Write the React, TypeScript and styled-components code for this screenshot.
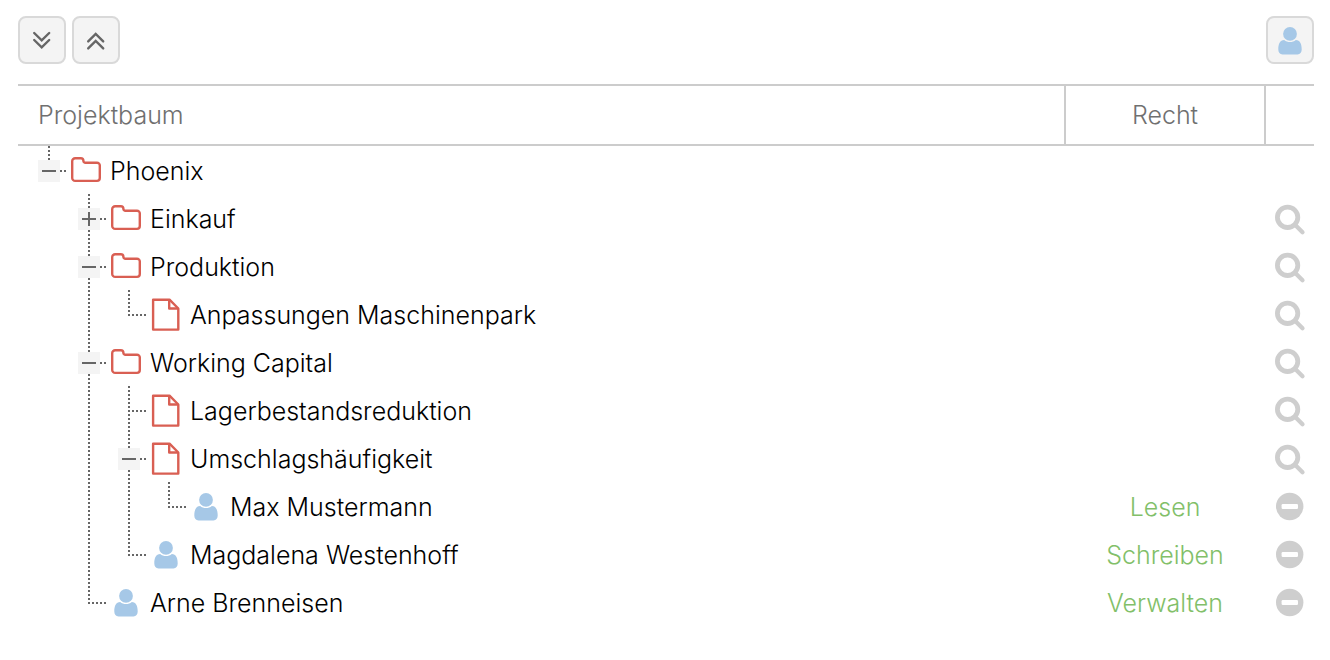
import React from "react";
import styled, { createGlobalStyle, css } from "styled-components";

const GlobalStyle = createGlobalStyle`
  *, *::before, *::after { box-sizing: border-box; }
  body {
    margin: 0;
    background: #fff;
    color: #000;
    font-family: Inter, "Liberation Sans", sans-serif;
    font-size: 25px;
    font-weight: 300;
    line-height: 32px;
  }
`;

const Page = styled.main`
  padding: 16px 16px 34px 18px;
`;

const Toolbar = styled.div`
  display: flex;
  gap: 6px;
  margin-bottom: 20px;
`;

const ToolButton = styled.button<{ $end?: boolean }>`
  display: flex;
  align-items: center;
  justify-content: center;
  width: 48px;
  height: 48px;
  padding: 0;
  border: 2px solid #d9d9d9;
  border-radius: 8px;
  background: #f4f4f4;
  color: #666;
  cursor: pointer;
  margin-left: ${(p) => (p.$end ? "auto" : "0")};
`;

const Table = styled.table`
  width: 100%;
  table-layout: fixed;
  border-collapse: separate;
  border-spacing: 0;
`;

const RightCol = styled.col`
  width: 200px;
`;

const ActionCol = styled.col`
  width: 50px;
`;

const HeadCell = styled.th<{ $center?: boolean }>`
  height: 62px;
  padding: 0 0 0 ${(p) => (p.$center ? "0" : "20px")};
  border-top: 2px solid #ccc;
  border-bottom: 2px solid #ccc;
  color: #707070;
  font-weight: 300;
  text-align: ${(p) => (p.$center ? "center" : "left")};

  & + & {
    border-left: 2px solid #ccc;
  }
`;

const Cell = styled.td`
  height: 48px;
  padding: 0;
`;

const NameCell = styled(Cell)`
  padding-left: 20px;
`;

const RightCell = styled(Cell)`
  padding: 2px 0 0 2px;
  color: #82bf69;
  text-align: center;
`;

const ActionCell = styled(Cell)`
  padding-left: 2px;
`;

const Node = styled.div`
  display: flex;
  align-items: center;
  height: 48px;
`;

type Line = "none" | "full" | "half";

const dotsDown = "repeating-linear-gradient(to bottom, #666 0 2px, transparent 2px 4px)";
const dotsAcross = "repeating-linear-gradient(to right, #666 0 2px, transparent 2px 4px)";

const Guide = styled.span<{ $line: Line }>`
  flex: none;
  width: 40px;
  height: 48px;
  ${(p) =>
    p.$line !== "none" &&
    css`
      background: ${dotsDown} 10px 0 / 2px 100% no-repeat;
    `}
`;

const Branch = styled.span<{ $line: Line }>`
  display: flex;
  flex: none;
  align-items: center;
  width: 32px;
  height: 48px;
  padding-top: 2px;
  background:
    ${dotsDown} 10px 0 / 2px ${(p) => (p.$line === "full" ? "48px" : "26px")} no-repeat,
    ${dotsAcross} 10px 24px / 18px 2px no-repeat;
`;

const Toggle = styled.button`
  display: flex;
  width: 22px;
  height: 22px;
  padding: 0;
  border: 0;
  background: #f4f4f4;
  cursor: pointer;
`;

const Label = styled.span`
  padding: 2px 0 0 8px;
  white-space: nowrap;
`;

const IconButton = styled.button`
  display: flex;
  align-items: center;
  justify-content: center;
  width: 48px;
  height: 48px;
  padding: 0;
  border: 0;
  background: none;
  cursor: pointer;
`;

const Glyph = styled.svg`
  display: block;
  flex: none;
`;

const ChevronsIcon = ({ up }: { up?: boolean }) => (
  <Glyph width="24" height="24" viewBox="0 0 24 24" fill="none" stroke="#666" strokeWidth="2.4" strokeLinecap="round" strokeLinejoin="miter">
    {up ? (
      <path d="M4.200 13.400 11.700 6l7.500 7.400M4.200 20.400 11.700 13l7.500 7.400" />
    ) : (
      <path d="M4.200 5 11.700 12.400 19.200 5M4.200 12 11.700 19.400 19.200 12" />
    )}
  </Glyph>
);

const PersonIcon = () => (
  <Glyph width="32" height="36" viewBox="0 0 32 36" fill="#a6c8e7">
    <circle cx="16" cy="11.9" r="6.9" />
    <path d="M10.2 17.9C6 18 4.3 21.8 4.3 27.6c0 3 1.6 4.8 4.2 4.8h15c2.6 0 4.2-1.8 4.2-4.8 0-5.8-1.7-9.6-5.9-9.7-1.6 1.3-3.6 2.1-5.8 2.1s-4.2-.8-5.8-2.1z" />
  </Glyph>
);

const FolderIcon = () => (
  <Glyph width="32" height="36" viewBox="0 0 32 36" fill="none" stroke="#d95f53" strokeWidth="2.4" strokeLinejoin="round">
    <path d="M2.2 9.200a3 3 0 0 1 3-3h5.600a2.600 2.600 0 0 1 2.600 2.600v.3a1.600 1.600 0 0 0 1.600 1.600h12a2.800 2.800 0 0 1 2.800 2.800v12.600a2.800 2.800 0 0 1-2.800 2.800H5.200a3 3 0 0 1-3-3z" />
  </Glyph>
);

const FileIcon = () => (
  <Glyph width="32" height="36" viewBox="0 0 32 36" fill="none" stroke="#d95f53" strokeWidth="2.4" strokeLinejoin="round">
    <path d="M3.1 3.7h16.400l8.800 8.800v21.100H3.1z" />
    <path d="M19.2 3.700v8.800h9.100" />
  </Glyph>
);

const SearchIcon = () => (
  <Glyph width="32" height="36" viewBox="0 0 32 36" fill="none" stroke="#cecece" strokeLinecap="round">
    <circle cx="13.6" cy="17.3" r="10.2" strokeWidth="4.8" />
    <path d="M21.5 25.2 28.5 32.2" strokeWidth="4.3" />
  </Glyph>
);

const RemoveIcon = () => (
  <Glyph width="32" height="36" viewBox="0 0 32 36">
    <circle cx="15.7" cy="18.5" r="13.7" fill="#cecece" />
    <rect x="7.6" y="16" width="16.4" height="5" rx="1.2" fill="#fff" />
  </Glyph>
);

const ToggleIcon = ({ open }: { open: boolean }) => (
  <Glyph width="22" height="22" viewBox="0 0 22 22" stroke="#666" strokeWidth="2">
    <path d={open ? "M4 11h14" : "M4 11h14M11 4v14"} />
  </Glyph>
);

const icons = { folder: FolderIcon, file: FileIcon, person: PersonIcon };

interface TreeRow {
  name: string;
  kind: keyof typeof icons;
  guides: Line[];
  branch: Line;
  open?: boolean;
  right?: string;
  action?: "search" | "remove";
}

const rows: TreeRow[] = [
  { name: "Phoenix", kind: "folder", guides: [], branch: "half", open: true },
  { name: "Einkauf", kind: "folder", guides: ["none"], branch: "full", open: false, action: "search" },
  { name: "Produktion", kind: "folder", guides: ["none"], branch: "full", open: true, action: "search" },
  { name: "Anpassungen Maschinenpark", kind: "file", guides: ["none", "full"], branch: "half", action: "search" },
  { name: "Working Capital", kind: "folder", guides: ["none"], branch: "full", open: true, action: "search" },
  { name: "Lagerbestandsreduktion", kind: "file", guides: ["none", "full"], branch: "full", action: "search" },
  { name: "Umschlagshäufigkeit", kind: "file", guides: ["none", "full"], branch: "full", open: true, action: "search" },
  { name: "Max Mustermann", kind: "person", guides: ["none", "full", "full"], branch: "half", right: "Lesen", action: "remove" },
  { name: "Magdalena Westenhoff", kind: "person", guides: ["none", "full"], branch: "half", right: "Schreiben", action: "remove" },
  { name: "Arne Brenneisen", kind: "person", guides: ["none"], branch: "half", right: "Verwalten", action: "remove" },
];

export default function App() {
  return (
    <>
      <GlobalStyle />
      <Page>
        <Toolbar>
          <ToolButton type="button" aria-label="Alle aufklappen">
            <ChevronsIcon />
          </ToolButton>
          <ToolButton type="button" aria-label="Alle zuklappen">
            <ChevronsIcon up />
          </ToolButton>
          <ToolButton type="button" aria-label="Person" $end>
            <PersonIcon />
          </ToolButton>
        </Toolbar>
        <Table>
          <colgroup>
            <col />
            <RightCol />
            <ActionCol />
          </colgroup>
          <thead>
            <tr>
              <HeadCell scope="col">Projektbaum</HeadCell>
              <HeadCell scope="col" $center>Recht</HeadCell>
              <HeadCell scope="col" aria-label="Aktion" />
            </tr>
          </thead>
          <tbody>
            {rows.map((row) => {
              const Icon = icons[row.kind];
              return (
                <tr key={row.name}>
                  <NameCell>
                    <Node>
                      {row.guides.map((line, i) => (
                        <Guide key={i} $line={line} />
                      ))}
                      <Branch $line={row.branch}>
                        {row.open !== undefined && (
                          <Toggle type="button" aria-label={row.name} aria-expanded={row.open}>
                            <ToggleIcon open={row.open} />
                          </Toggle>
                        )}
                      </Branch>
                      <Icon />
                      <Label>{row.name}</Label>
                    </Node>
                  </NameCell>
                  <RightCell>{row.right}</RightCell>
                  <ActionCell>
                    {row.action && (
                      <IconButton type="button" aria-label={`${row.name} ${row.action === "search" ? "suchen" : "entfernen"}`}>
                        {row.action === "search" ? <SearchIcon /> : <RemoveIcon />}
                      </IconButton>
                    )}
                  </ActionCell>
                </tr>
              );
            })}
          </tbody>
        </Table>
      </Page>
    </>
  );
}
